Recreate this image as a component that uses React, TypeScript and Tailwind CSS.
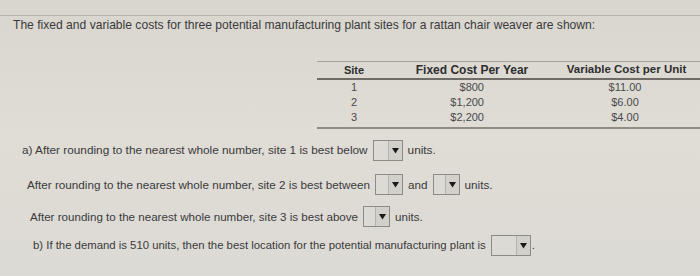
import React from "react";

function Dropdown({ w = "w-[30px]" }: { w?: string }) {
  return (
    <span
      className={`inline-flex h-[21px] ${w} border border-[#8c8b87] bg-[#dcdad4] shrink-0`}
    >
      <span className="flex-1" />
      <span className="w-[14px] flex items-center justify-center border-l border-[#b5b3ad] bg-[#d2d0ca]">
        <svg width="7" height="7" viewBox="0 0 7 7">
          <path d="M0 1 L7 1 L3.5 6.5 Z" fill="#1a1a1a" />
        </svg>
      </span>
    </span>
  );
}

const rows = [
  { site: "1", fixed: "$800", variable: "$11.00" },
  { site: "2", fixed: "$1,200", variable: "$6.00" },
  { site: "3", fixed: "$2,200", variable: "$4.00" },
];

export default function App() {
  return (
    <div className="w-[700px] h-[276px] overflow-hidden bg-gradient-to-b from-[#d9d6cf] via-[#e0dcd6] to-[#dcdad5] font-['Liberation_Sans',Arial,sans-serif] text-[11px] text-[#3a3a3a]">
      <div className="h-[15px]" />
      <div className="border-t border-[#b9b5ae] pt-[2px] pl-[13px] leading-[14px] text-[12.1px]">
        The fixed and variable costs for three potential manufacturing plant sites for a rattan chair weaver are shown:
      </div>

      <div className="mt-[29px] ml-[317px] w-[383px] border-t border-[#a7a49e]">
        <div className="flex h-[18px] items-center border-b-2 border-[#6f6c67] font-bold text-[#2e2e2e]">
          <div className="w-[74px] text-center">Site</div>
          <div className="w-[162px] text-center text-[12px]">Fixed Cost Per Year</div>
          <div className="flex-1 text-center text-[11.5px]">Variable Cost per Unit</div>
        </div>
        <div className="pb-[2px] border-b-2 border-[#8f8c86] text-[#4a4a4a]">
          {rows.map((r) => (
            <div key={r.site} className="flex h-[15px] items-center">
              <div className="w-[74px] text-center">{r.site}</div>
              <div className="w-[167px] text-right pr-[74px]">{r.fixed}</div>
              <div className="flex-1 text-center pr-[8px]">{r.variable}</div>
            </div>
          ))}
        </div>
      </div>

      <div className="mt-[11px] ml-[22px] flex items-center gap-[5px] text-[11.8px]">
        <span>a) After rounding to the nearest whole number, site 1 is best below</span>
        <Dropdown />
        <span>units.</span>
      </div>

      <div className="mt-[13px] ml-[27px] flex items-center gap-[5px] text-[11.7px]">
        <span>After rounding to the nearest whole number, site 2 is best between</span>
        <Dropdown w="w-[28px]" />
        <span>and</span>
        <Dropdown w="w-[27px]" />
        <span>units.</span>
      </div>

      <div className="mt-[11px] ml-[30px] flex items-center gap-[5px] text-[11.6px]">
        <span>After rounding to the nearest whole number, site 3 is best above</span>
        <Dropdown w="w-[27px]" />
        <span>units.</span>
      </div>

      <div className="mt-[8px] ml-[33px] flex items-center gap-[5px] text-[11.35px]">
        <span>b) If the demand is 510 units, then the best location for the potential manufacturing plant is</span>
        <span className="inline-flex items-center">
          <Dropdown w="w-[40px]" />
          <span className="ml-[1px]">.</span>
        </span>
      </div>
    </div>
  );
}
